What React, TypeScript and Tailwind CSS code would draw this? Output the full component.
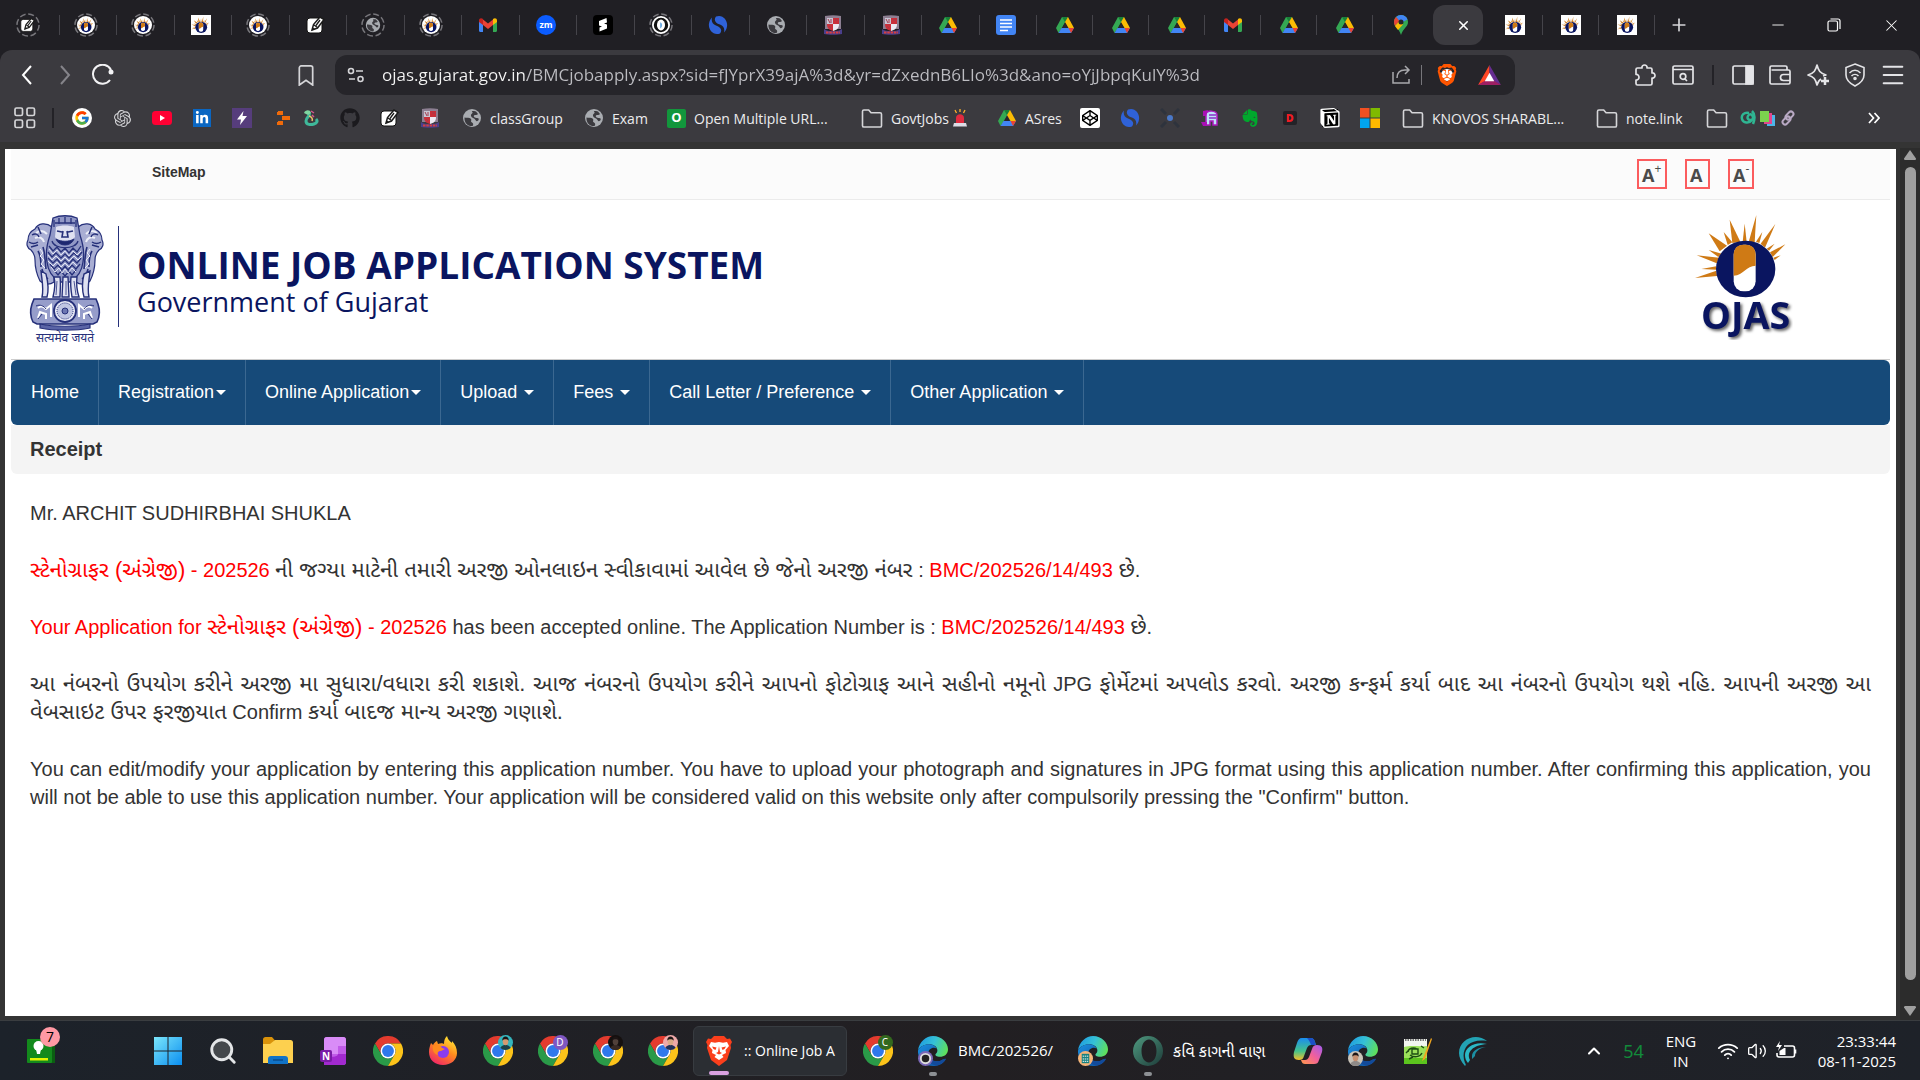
import { useState, type ReactNode } from 'react';
import { Minus, Plus, X, ChevronUp, Wifi, Volume2, Menu, Search } from 'lucide-react';
import { FaBrave, FaCodepen, FaEvernote, FaGithub, FaLinkedinIn } from 'react-icons/fa6';
import { FcGoogle } from 'react-icons/fc';
import { SiNotion, SiOpenai } from 'react-icons/si';

/* ---------- Site logo ---------- */

const rays = [
    '507,307 525,307 530,226',
    '458,310 482,306 450,240',
    '543,312 556,324 587,253',
    '420,335 442,318 387,281',
    '489,307 501,307 495,252',
    '444,316 458,308 432,277',
    '529,306 539,310 548,277',
    '561,327 568,333 585,312',
    '571,338 579,352 617,314',
    '581,354 585,361 603,347',
    '416,352 426,342 387,331',
    '411,371 418,354 351,347',
    '410,380 410,390 365,388',
    '410,393 412,409 346,415',
];

function OjasSun() {
    return (
        <g>
            {rays.map((points) => (
                <polygon key={points} points={points} fill="#cf7a15" />
            ))}
            <ellipse cx="498" cy="388" rx="89" ry="85" fill="#0a1560" />
            <rect x="462" y="315" width="66" height="140" rx="30" fill="#fff" />
            <path d="M462 408V345c0-20 12-30 28-30h10c16 0 28 10 28 30v33c-28 0-36 28-66 30Z" fill="#cf7a15" />
        </g>
    );
}

function OjasLogo() {
    return (
        <svg viewBox="340 220 300 381" className="h-[127px] w-[100px]" role="img" aria-label="OJAS">
            <OjasSun />
            <text
                x="364"
                y="568"
                fontSize="113"
                fontWeight="700"
                fill="#0a1560"
                className="font-['Open_Sans',sans-serif] drop-shadow-[6px_6px_5px_rgba(0,0,0,0.6)]"
            >
                OJAS
            </text>
        </svg>
    );
}

function Emblem() {
    return (
        <svg viewBox="0 0 78 130" className="h-[130px] w-[78px]" role="img" aria-label="State emblem of India" fill="none" stroke="#26307a">
            {/* side lions */}
            <path d="M26 12c-6-5-14-4-17 2-4 2-7 6-7 11-2 4-1 8 3 10 3 3 4 6 4 10 0 8 2 15 5 21 4 4 10 4 14 1V20Z" fill="#a9aed3" strokeWidth="1.2" />
            <path d="M52 12c6-5 14-4 17 2 4 2 7 6 7 11 2 4 1 8-3 10-3 3-4 6-4 10 0 8-2 15-5 21-4 4-10 4-14 1V20Z" fill="#a9aed3" strokeWidth="1.2" />
            <path d="M10 18c4-3 8-2 11 1M9 23c4-2 8 0 9 4M60 19c3-3 7-4 11-1M60 27c1-4 5-6 9-4" stroke="#eceef8" strokeWidth="2" />
            <path d="M6 20c3-2 6-1 7 2M3 27c3 2 6 2 9 0M5 32l7-2M12 12l3 7M72 20c-3-2-6-1-7 2M75 27c-3 2-6 2-9 0M73 32l-7-2M66 12l-3 7" strokeWidth="1.5" />
            <path d="M12 36c3 5 3 10 3 16M17 32c2 6 2 14 3 22M16 54c1 5 3 8 6 10M66 36c-3 5-3 10-3 16M61 32c-2 6-2 14-3 22M62 54c-1 5-3 8-6 10" strokeWidth="1.6" />
            <path d="M14 34l3 4-3 3 4 4-3 4 4 4M64 34l-3 4 3 3-4 4 3 4-4 4" stroke="#eceef8" strokeWidth="1" />
            {/* centre lion */}
            <path d="M27 3c7-3 17-3 24 0l3 17c3 9 5 17 3 27-1 9-6 16-13 20H34c-7-4-12-11-13-20-2-10 0-18 3-27Z" fill="#9198c6" strokeWidth="1.3" />
            <path d="M30 12c5-2 13-2 18 0l1 10c-4 7-16 7-20 0Z" fill="#dfe1f1" stroke="none" />
            <path d="M29 8h20M28 5v7M33 3v6M39 2v6M45 3v6M50 5v7" strokeWidth="1.3" />
            <path d="M31 16l5 1M47 16l-5 1M37 16l-1 6h6l-1-6" strokeWidth="1.6" />
            <path d="M30 24c3 8 15 8 18 0-5 3-13 3-18 0Z" fill="#1d276f" />
            <path d="M26 26c2 9 24 9 26 0" strokeWidth="1.2" />
            <path
                d="M23 31l4 5 4-4 4 5 4-4 4 5 4-5 4 4 4-6M22 37l4 5 4-4 5 5 4-4 4 4 5-5 4 4 4-5M22 43l5 5 4-4 4 5 4-4 4 4 4-5 4 4 4-5M24 49l4 5 4-4 4 5 3-4 3 4 4-5 4 4 4-5M28 55l4 5 3-4 4 5 4-5 3 4 4-5"
                stroke="#26307a"
                strokeWidth="1.3"
            />
            <path
                d="M23 34l4 5 4-4 4 5 4-4 4 5 4-5 4 4 4-4M22 40l4 5 4-4 5 5 4-4 4 4 5-5 4 4 4-4M22 46l5 5 4-4 4 5 4-4 4 4 4-5 4 4M25 52l4 5 4-4 3 5 3-4 3 4 4-5 4 4"
                stroke="#e3e5f3"
                strokeWidth="1"
            />
            {/* legs */}
            <path d="M15 56c1 10 3 18 1 26h5c2-7 1-15-1-23ZM28 62c2 8 0 16-1 20h7c0-6 1-12 0-20ZM37 62l-1 20h7l-1-20ZM45 62c-1 8 0 14 1 20h7c-2-6-3-12-2-20ZM58 59c-2 8-2 16 0 23h5c-2-8 0-16 1-26Z" fill="#dfe1f1" strokeWidth="1.4" />
            <path d="M31 66l-1 14M40 66v14M48 66l2 14" strokeWidth="0.8" />
            {/* abacus with the wheel */}
            <path d="M8 84h62l2 5c2 6 2 12-1 18l-4 2H11l-4-2c-3-6-3-12-1-18Z" fill="#969dca" strokeWidth="1.6" />
            <circle cx="39" cy="96" r="11" fill="#e9eaf6" strokeWidth="1.8" />
            <circle cx="39" cy="96" r="8" fill="#c0c5e2" strokeWidth="1" strokeDasharray="1 1" />
            <circle cx="39" cy="96" r="3" fill="#6d76b2" />
            <path d="M12 93c3-3 6-1 8 1l5-4v12M12 103l2-6 6 2v5M66 93c-3-3-6-1-8 1l-5-4v12M66 103l-2-6-6 2v5" stroke="#fff" strokeWidth="2" />
            <path d="M10 91c4-2 8 0 10 3M12 104l4-5M68 91c-4-2-8 0-10 3M66 104l-4-5" strokeWidth="1" />
            <path d="M14 109c14 3 36 3 50 0v4c-14 3-36 3-50 0Z" fill="#5a64a6" strokeWidth="1.2" />
            <text x="39" y="127" textAnchor="middle" fontSize="12" fill="#26307a" stroke="none" className="font-['Noto_Sans',sans-serif]">
                सत्यमेव जयते
            </text>
        </svg>
    );
}

/* ---------- Favicons ---------- */

function OjasFavicon() {
    return (
        <svg viewBox="335 215 300 300" className="size-5 bg-white">
            <g transform="translate(-10 12)">
                <OjasSun />
            </g>
        </svg>
    );
}

function Sleeping({ children }: { children: ReactNode }) {
    return (
        <span className="relative flex size-6 items-center justify-center">
            <svg viewBox="0 0 26 26" className="absolute size-6" fill="none" stroke="#77767b" strokeWidth="1.6">
                <circle cx="13" cy="13" r="12" strokeDasharray="6.5 2.9" />
            </svg>
            {children}
        </span>
    );
}

function OjasSleeping() {
    return (
        <Sleeping>
            <svg viewBox="335 215 300 300" className="size-[18px] rounded-full bg-white">
                <g transform="translate(-10 12)">
                    <OjasSun />
                </g>
            </svg>
        </Sleeping>
    );
}

function PencilIcon({ small = false }: { small?: boolean }) {
    return (
        <svg viewBox="0 0 20 20" className={small ? 'size-4' : 'size-5'}>
            <rect x="1" y="3" width="15" height="15" rx="3" fill="#fff" stroke="#111" strokeWidth="1" />
            <path d="M6 15l1.500-5.500L14 2l4 2.500-6.500 8.500Z" fill="#fff" stroke="#1b1b1b" strokeWidth="1.500" />
            <path d="M8 10l3.500 2.500M14 5l-4 5.500" stroke="#1b1b1b" strokeWidth="1.300" />
            <path d="M6 15.500l1-3 2 1.500Z" fill="#1b1b1b" />
        </svg>
    );
}

function GlobeIcon({ small = false }: { small?: boolean }) {
    return (
        <svg viewBox="0 0 20 20" className={small ? 'size-4' : 'size-5'}>
            <circle cx="10" cy="10" r="9" fill="#a9acb1" />
            <path d="M2.500 9.500c3 .5 5-.5 6.500 1.500 1 1.500-1 2.500 1 3.500s1 3 .5 3.500C6 18.500 2 15 2.500 9.500ZM10 3c1 0 3-.5 4 .5l2 2.500c-1 1.500-3 .5-4 1.500s1 2.500 3 2.500 2 1 1.500 2-2 2-3 0-4-2-4.500-4 1-2 1.500-3-1-1.500-.5-2Z" fill="#3b3a3f" />
        </svg>
    );
}

function GmailIcon() {
    return (
        <svg viewBox="0 0 20 20" className="size-5">
            <path d="M1 5v10.500c0 .8.500 1.500 1.500 1.500H5V9L1 5.500Z" fill="#4285f4" />
            <path d="M19 5v10.500c0 .8-.5 1.500-1.500 1.500H15V9l4-3.500Z" fill="#34a853" />
            <path d="M5 4.500l5 4 5-4V10l-5 4-5-4Z" fill="#ea4335" />
            <path d="M1 5.500C1 3 3.500 2.500 5 4v6L1 7Z" fill="#c5221f" />
            <path d="M19 5.500C19 3 16.500 2.500 15 4v6l4-3Z" fill="#fbbc04" />
        </svg>
    );
}

function ZoomIcon() {
    return (
        <svg viewBox="0 0 20 20" className="size-5">
            <circle cx="10" cy="10" r="10" fill="#0b5cff" />
            <text x="10" y="13" textAnchor="middle" fontSize="9" fontWeight="700" fill="#fff" className="font-['Open_Sans',sans-serif]">
                zm
            </text>
        </svg>
    );
}

function BlackSIcon() {
    return (
        <svg viewBox="0 0 20 20" className="size-5">
            <rect width="20" height="20" rx="4" fill="#000" />
            <path d="M13.500 3 6 6v4.500l3 1-2.500 1v4L14 13.500V9.500l-3-1 3-1Z" fill="#fff" />
        </svg>
    );
}

function OvalIcon() {
    return (
        <Sleeping>
            <svg viewBox="0 0 20 20" className="size-[18px]">
                <circle cx="10" cy="10" r="9" fill="#111" stroke="#fff" strokeWidth="2" />
                <ellipse cx="10" cy="10" rx="4.500" ry="6" fill="#fff" />
                <path d="M9 7c3 1 3 5 0 7Z" fill="#6aa9e0" />
            </svg>
        </Sleeping>
    );
}

function BlueSIcon() {
    return (
        <svg viewBox="0 0 20 20" className="size-5" fill="#2f62d8">
            <path d="M8 1.500c7-2.500 12 4 11 10-.5 3-1.500 4.500-3 6 1-4-.5-6.500-4-8C7 8 5.500 4.500 8 1.500Z" />
            <path d="M12 18.500c-7 2.500-12-4-11-10 .5-3 1.500-4.500 3-6-1 4 .5 6.500 4 8 5 1.500 6.500 5 4 8Z" />
        </svg>
    );
}

function CrestIcon() {
    return (
        <svg viewBox="0 0 20 20" className="size-5">
            <path d="M2 1c5-1 11-1 16 0v13H2Z" fill="#8d7f92" />
            <path d="M4 3h6v6H4Z" fill="#c9c6d4" />
            <path d="M10 3h6v6h-6Z" fill="#c92f3a" />
            <path d="M4 9h6v7c-4-1-6-3-6-7Z" fill="#c92f3a" />
            <path d="M10 9h6c0 4-2 6-6 7Z" fill="#eceaf2" />
            <path d="M5 4l2 4M8 4v4M12 5h3M6 11l2 2" stroke="#a33a4c" />
            <path d="M1 14c4 3 14 3 18 0v5c-4 1-14 1-18 0Z" fill="#4b3f8c" />
            <path d="M3 17.500h14" stroke="#d63f3f" strokeWidth="2" strokeDasharray="2.500 .8" />
        </svg>
    );
}

function DriveIcon() {
    return (
        <svg viewBox="0 0 20 20" className="size-5">
            <path d="M7 2h6L6 14.500 3.500 18 1 13Z" fill="#34a853" />
            <path d="M7 2h6l-3 5Z" fill="#188038" />
            <path d="M13 2l6 11h-5.500L10 7Z" fill="#fbbc04" />
            <path d="M6.500 13H19l-3 5H3.500Z" fill="#4285f4" />
            <path d="M13.500 13H19l-3 5Z" fill="#ea4335" />
            <path d="M10 8l2.800 5H7.200Z" fill="#26252a" />
        </svg>
    );
}

function DocsIcon() {
    return (
        <svg viewBox="0 0 20 20" className="size-5">
            <rect width="20" height="20" rx="3" fill="#4285f4" />
            <path d="M4 5h12M4 8.500h12M4 12h12M4 15.500h8" stroke="#fff" strokeWidth="1.700" />
        </svg>
    );
}

function MapsIcon() {
    return (
        <svg viewBox="0 0 20 20" className="size-5">
            <path d="M10 0c4 0 7 3 7 7 0 5-5 6-7 13C8 13 3 12 3 7c0-4 3-7 7-7Z" fill="#34a853" />
            <path d="M10 0c3 0 5.500 1.500 6.500 4.500L10 8 5 2C6.500.7 8 0 10 0Z" fill="#4285f4" />
            <path d="M5 2l3.500 4L4 11C2.500 8 2.500 4.500 5 2Z" fill="#ea4335" />
            <path d="M4 11l5-5.500 3 4L7 15C6 13.500 4.800 12.500 4 11Z" fill="#fbbc04" />
            <circle cx="10" cy="7" r="2.500" fill="#26252a" />
        </svg>
    );
}

const leftTabs: { title: string; icon: ReactNode }[] = [
    { title: 'Notes', icon: <Sleeping><PencilIcon small /></Sleeping> },
    { title: 'OJAS', icon: <OjasSleeping /> },
    { title: 'OJAS', icon: <OjasSleeping /> },
    { title: 'OJAS', icon: <OjasFavicon /> },
    { title: 'OJAS', icon: <OjasSleeping /> },
    { title: 'Notes', icon: <PencilIcon /> },
    { title: 'Page', icon: <Sleeping><GlobeIcon small /></Sleeping> },
    { title: 'OJAS', icon: <OjasSleeping /> },
    { title: 'Gmail', icon: <GmailIcon /> },
    { title: 'Zoom', icon: <ZoomIcon /> },
    { title: 'Page', icon: <BlackSIcon /> },
    { title: 'Page', icon: <OvalIcon /> },
    { title: 'Page', icon: <BlueSIcon /> },
    { title: 'Page', icon: <GlobeIcon /> },
    { title: 'University', icon: <CrestIcon /> },
    { title: 'University', icon: <CrestIcon /> },
    { title: 'Drive', icon: <DriveIcon /> },
    { title: 'Docs', icon: <DocsIcon /> },
];

const middleTabs: { title: string; icon: ReactNode }[] = [
    { title: 'Drive', icon: <DriveIcon /> },
    { title: 'Drive', icon: <DriveIcon /> },
    { title: 'Drive', icon: <DriveIcon /> },
    { title: 'Gmail', icon: <GmailIcon /> },
    { title: 'Drive', icon: <DriveIcon /> },
    { title: 'Drive', icon: <DriveIcon /> },
];

function TabStrip() {
    return (
        <div className="flex h-[50px] shrink-0 items-center bg-[#201f24] pl-0.5">
            <div className="flex w-[1035px]">
                {leftTabs.map((tab, i) => (
                    <button key={i} aria-label={tab.title} className="flex h-5 flex-1 items-center justify-center border-r border-[#45444a] pr-1">
                        {tab.icon}
                    </button>
                ))}
            </div>
            {middleTabs.map((tab, i) => (
                <button key={i} aria-label={tab.title} className="flex h-5 w-14 items-center justify-center border-r border-[#45444a]">
                    {tab.icon}
                </button>
            ))}
            <button aria-label="Maps" className="flex h-5 w-14 items-center justify-center">
                <MapsIcon />
            </button>
            <button aria-label="Close tab" className="mx-1 flex h-10 w-[50px] items-center justify-center rounded-xl bg-[#3b3a3f] pl-2.5 text-white">
                <X className="size-[15px]" strokeWidth={2.5} />
            </button>
            {[0, 1, 2].map((i) => (
                <button key={i} aria-label="OJAS" className="flex h-5 w-14 items-center justify-center border-r border-[#45444a]">
                    <OjasFavicon />
                </button>
            ))}
            <button aria-label="New tab" className="ml-[14px] text-[#d5d5d8]">
                <Plus className="size-5" />
            </button>
            <div className="ml-auto flex text-white">
                <button aria-label="Minimize" className="flex w-14 justify-center">
                    <Minus className="size-[18px]" strokeWidth={1.2} />
                </button>
                <button aria-label="Restore" className="flex w-14 items-center justify-center">
                    <svg viewBox="0 0 14 14" className="size-[14px]" fill="none" stroke="#fff" strokeWidth="1.200">
                        <rect x="1" y="3" width="9.500" height="10" rx="1.500" />
                        <path d="M3.500 1H11a2 2 0 0 1 2 2v8" />
                    </svg>
                </button>
                <button aria-label="Close" className="flex w-[58px] justify-center">
                    <X className="size-[19px]" strokeWidth={1.3} />
                </button>
            </div>
        </div>
    );
}

/* ---------- Address row ---------- */

function BatIcon() {
    return (
        <svg viewBox="0 0 24 22" className="h-[21px] w-[23px]">
            <path d="M12 0 0 21l8-4 4-8Z" fill="#ff4724" />
            <path d="M12 0l12 21-8-4-4-8Z" fill="#662d91" />
            <path d="M0 21h24l-8-5H8Z" fill="#9e1f63" />
            <path d="M12 8l5 9H7Z" fill="#fff" />
        </svg>
    );
}

function AddressRow() {
    const [url, setUrl] = useState('ojas.gujarat.gov.in/BMCjobapply.aspx?sid=fJYprX39ajA%3d&yr=dZxednB6LIo%3d&ano=oYjJbpqKulY%3d');

    return (
        <div className="flex h-[50px] items-center text-[#e4e4e7]">
            <div className="flex w-[335px] items-center pl-2">
                <button aria-label="Back" className="flex w-[38px] justify-center">
                    <svg viewBox="0 0 20 20" className="size-5" fill="none" stroke="#fff" strokeWidth="2">
                        <path d="M14 1 6 10l8 9" />
                    </svg>
                </button>
                <button aria-label="Forward" className="flex w-[38px] justify-center">
                    <svg viewBox="0 0 20 20" className="size-5" fill="none" stroke="#85848a" strokeWidth="2">
                        <path d="M6 1l8 9-8 9" />
                    </svg>
                </button>
                <button aria-label="Reload" className="flex w-[38px] justify-center">
                    <svg viewBox="0 0 24 22" className="h-[22px] w-6" fill="none" stroke="#f2f2f4" strokeWidth="2">
                        <path d="M19 16A9.500 9.500 0 1 1 20 6" />
                        <circle cx="20" cy="8" r="2.500" fill="#f2f2f4" stroke="none" />
                    </svg>
                </button>
                <button aria-label="Bookmark this page" className="mr-5 ml-auto">
                    <svg viewBox="0 0 18 22" className="h-[21px] w-[18px]" fill="none" stroke="#d5d5d8" strokeWidth="1.800">
                        <path d="M2 3a2 2 0 0 1 2-2h10a2 2 0 0 1 2 2v18l-7-5-7 5Z" />
                    </svg>
                </button>
            </div>

            <div className="flex h-10 flex-1 items-center rounded-xl bg-[#26252a] pl-3">
                <button aria-label="Site information">
                    <svg viewBox="0 0 18 18" className="size-[18px]" fill="none" stroke="#d5d5d8" strokeWidth="1.600">
                        <circle cx="4" cy="5" r="2.500" />
                        <circle cx="13.500" cy="13" r="2.500" />
                        <path d="M9 5h7M2 13h6" />
                    </svg>
                </button>
                <input
                    aria-label="Address"
                    value={url}
                    onChange={(e) => setUrl(e.target.value)}
                    className="ml-[17px] h-8 flex-1 bg-[linear-gradient(90deg,#f5f5f5_145px,#bdbdc2_145px)] bg-clip-text pb-0.5 font-['Open_Sans',sans-serif] text-[17px] text-transparent outline-none"
                />
                <div className="flex items-center">
                    <button aria-label="Share" className="mr-2.5">
                        <svg viewBox="0 0 20 20" className="size-5" fill="none" stroke="#a9a9ad" strokeWidth="1.500">
                            <path d="M2 7v11h16v-4M6 13c0-5 3-8 8-8h4M14 1l4 4-4 4" />
                        </svg>
                    </button>
                    <span className="h-5 w-px bg-[#77767b]" />
                    <button aria-label="Brave Shields" className="ml-[14px] text-[#ff5500]">
                        <span className="relative flex size-[22px] items-center justify-center">
                            <span className="absolute size-3 rounded-full bg-white" />
                            <FaBrave className="relative size-[22px]" />
                        </span>
                    </button>
                    <button aria-label="Brave Rewards" className="mr-[14px] ml-5">
                        <BatIcon />
                    </button>
                </div>
            </div>

            <div className="flex w-[405px] items-center justify-end pr-2">
                <button aria-label="Extensions" className="flex w-[38px] justify-center">
                    <svg viewBox="0 0 24 24" className="size-6" fill="none" stroke="currentColor" strokeWidth="1.700" strokeLinejoin="round">
                        <path d="M3 6.500c0-1 .5-1.500 1.500-1.500H9c-.8-4 5.800-4 5 0h3.500c1 0 1.500.5 1.500 1.500V10c4-.8 4 5.800 0 5v5.500c0 1-.5 1.500-1.500 1.500h-13c-1 0-1.500-.5-1.500-1.500V17c4 .5 4-6 0-5.500Z" />
                    </svg>
                </button>
                <button aria-label="Search tabs" className="flex w-[38px] justify-center">
                    <svg viewBox="0 0 22 22" className="size-[22px]" fill="none" stroke="currentColor" strokeWidth="1.700">
                        <rect x="1" y="2" width="20" height="18" rx="1.500" />
                        <path d="M1 5.500h20M12.500 14.500 15 17" />
                        <circle cx="11" cy="12.500" r="2.800" />
                    </svg>
                </button>
                <span className="mx-2.5 h-5 w-0.5 bg-[#232227]" />
                <button aria-label="Sidebar" className="flex w-[37px] justify-center">
                    <svg viewBox="0 0 22 22" className="size-[22px]" fill="none" stroke="currentColor" strokeWidth="1.700">
                        <rect x="1" y="2" width="20" height="18" rx="1.500" />
                        <path d="M14 2h7v18h-7Z" fill="currentColor" />
                    </svg>
                </button>
                <button aria-label="Wallet" className="flex w-[38px] justify-center">
                    <svg viewBox="0 0 22 22" className="size-[22px]" fill="none" stroke="currentColor" strokeWidth="1.700">
                        <path d="M18 6V3.500A1.500 1.500 0 0 0 16.500 2h-14A1.500 1.500 0 0 0 1 3.500v15A1.500 1.500 0 0 0 2.500 20h17a1.500 1.500 0 0 0 1.500-1.500v-11A1.500 1.500 0 0 0 19.500 6H2.500" />
                        <path d="M21 10.500h-6.500a3 3 0 0 0 0 6H21" />
                    </svg>
                </button>
                <button aria-label="Leo AI" className="flex w-[37px] justify-center">
                    <svg viewBox="0 0 24 24" className="size-6" fill="none" stroke="currentColor" strokeWidth="1.700" strokeLinejoin="round">
                        <path d="M15 16c-2 1-3 3-4 6-1.500-6-3-8-9-10 6-2 7.500-4 9-10 1.500 6 3 8 9 10-1 .3-2 .7-3 1" />
                        <path d="M19 14v8M15 18h8" strokeWidth="2.500" />
                    </svg>
                </button>
                <button aria-label="VPN" className="flex w-[38px] justify-center">
                    <svg viewBox="0 0 22 24" className="h-6 w-[22px]" fill="none" stroke="currentColor" strokeWidth="1.600">
                        <path d="M11 1l9 3.500V12c0 5-4 8.500-9 11-5-2.500-9-6-9-11V4.500Z" />
                        <path d="M5.500 10c3.500-3.500 7.500-3.500 11 0M7.500 13c2-2 5-2 7 0" />
                        <circle cx="11" cy="15.500" r="1" fill="currentColor" />
                    </svg>
                </button>
                <button aria-label="Menu" className="flex w-[38px] justify-center">
                    <Menu className="size-7" strokeWidth={1.7} />
                </button>
            </div>
        </div>
    );
}

/* ---------- Bookmarks ---------- */

function FolderOutline() {
    return (
        <svg viewBox="0 0 22 20" className="h-[19px] w-[22px] shrink-0" fill="none" stroke="#d5d5d8" strokeWidth="1.700">
            <path d="M1 17.500v-15C1 1.500 1.500 1 2.500 1h5l2.500 3h9.500c1 0 1.500.5 1.500 1.500v12c0 1-.5 1.500-1.500 1.500h-17C1.500 19 1 18.500 1 17.500Z" />
        </svg>
    );
}

function SirenIcon() {
    return (
        <svg viewBox="0 0 14 18" className="h-[18px] w-[14px] shrink-0">
            <path d="M3 14V9c0-5 8-5 8 0v5Z" fill="#e02b3f" />
            <path d="M1 14h12l1 3.500H0Z" fill="#dcdce6" />
            <path d="M7 0v3M2 1l1.500 3M12 1l-1.500 3" stroke="#ffb02e" strokeWidth="1.300" />
        </svg>
    );
}

const quickLinks: { title: string; icon: ReactNode }[] = [
    { title: 'Google', icon: <span className="flex size-5 items-center justify-center rounded-full bg-white"><FcGoogle className="size-4" /></span> },
    { title: 'ChatGPT', icon: <SiOpenai className="size-[17px] text-[#d5d5d8]" /> },
    {
        title: 'YouTube',
        icon: (
            <svg viewBox="0 0 20 14" className="h-[14px] w-5">
                <rect width="20" height="14" rx="3.500" fill="#ff0033" />
                <path d="M8 4l5 3-5 3Z" fill="#fff" />
            </svg>
        ),
    },
    { title: 'LinkedIn', icon: <span className="flex size-[18px] items-center justify-center bg-[#0a66c2] text-white"><FaLinkedinIn className="size-[14px]" /></span> },
    {
        title: 'Bolt',
        icon: (
            <svg viewBox="0 0 20 20" className="size-5">
                <rect width="20" height="20" fill="#563d7c" />
                <path d="M11.500 3 5 11.500h4L8 17l7-9h-4.500Z" fill="#fff" />
            </svg>
        ),
    },
];

const middleLinks: { title: string; icon: ReactNode }[] = [
    { title: 'GitHub', icon: <FaGithub className="size-5 text-[#1b1a1e]" /> },
    { title: 'Notes', icon: <PencilIcon /> },
    { title: 'University', icon: <CrestIcon /> },
];

const siteLinks: { title: string; icon: ReactNode }[] = [
    { title: 'CodePen', icon: <span className="flex size-5 items-center justify-center rounded-xs bg-white text-black"><FaCodepen className="size-4" /></span> },
    { title: 'Simplenote', icon: <BlueSIcon /> },
    {
        title: 'Hub',
        icon: (
            <svg viewBox="0 0 20 20" className="size-5" stroke="#2e333d" strokeWidth="3">
                <path d="M1 1l5 5M19 1l-5 5M1 19l5-5M19 19l-5-5" />
                <circle cx="10" cy="10" r="3" fill="#4a78c8" stroke="none" />
            </svg>
        ),
    },
    {
        title: 'Machine',
        icon: (
            <svg viewBox="0 0 18 18" className="size-[18px]">
                <path d="M5 16V5c0-4 11-4 11 1v10h-4v-4H9v4Z" fill="#bfe3f7" stroke="#b01ac0" strokeWidth="1.500" />
                <path d="M8 6h7M8 9h7" stroke="#8a2fc9" strokeWidth="1.400" />
                <path d="M2 2l5-1-2 6H2ZM0 13h6v4H2Z" fill="#a90fb5" />
            </svg>
        ),
    },
    { title: 'Evernote', icon: <FaEvernote className="size-5 text-[#00a82d]" /> },
    {
        title: 'D',
        icon: (
            <svg viewBox="0 0 14 14" className="size-[14px]">
                <rect width="14" height="14" rx="2" fill="#232227" />
                <path d="M5 4h1.500a3 3 0 0 1 0 6H5Z" fill="none" stroke="#ed1c24" strokeWidth="2.200" />
            </svg>
        ),
    },
    {
        title: 'Notion',
        icon: (
            <span className="relative flex size-5 items-center justify-center">
                <span className="absolute inset-x-0.5 inset-y-px bg-black" />
                <SiNotion className="relative size-5 text-white" />
            </span>
        ),
    },
    {
        title: 'Microsoft',
        icon: (
            <svg viewBox="0 0 20 20" className="size-5">
                <rect width="9.500" height="9.500" fill="#f25022" />
                <rect x="10.500" width="9.500" height="9.500" fill="#7fba00" />
                <rect y="10.500" width="9.500" height="9.500" fill="#00a4ef" />
                <rect x="10.500" y="10.500" width="9.500" height="9.500" fill="#ffb900" />
            </svg>
        ),
    },
];

function IconLinks({ items }: { items: { title: string; icon: ReactNode }[] }) {
    return (
        <>
            {items.map((item) => (
                <a key={item.title} href="#" aria-label={item.title} className="flex w-10 shrink-0 justify-center">
                    {item.icon}
                </a>
            ))}
        </>
    );
}

function NamedLink({ icon, label, width }: { icon: ReactNode; label: string; width: string }) {
    return (
        <a href="#" className={`flex shrink-0 items-center gap-2 pl-3 whitespace-nowrap ${width}`}>
            {icon}
            {label}
        </a>
    );
}

function BookmarksBar() {
    return (
        <div className="flex h-[42px] items-center pb-1.5 font-['Open_Sans',sans-serif] text-[14px] text-[#ececee]">
            <button aria-label="All bookmarks" className="ml-[14px]">
                <svg viewBox="0 0 22 22" className="size-[22px]" fill="none" stroke="#d5d5d8" strokeWidth="1.700">
                    <rect x="1" y="1" width="7.500" height="7.500" rx="1.500" />
                    <rect x="13" y="1" width="7.500" height="7.500" rx="1.500" />
                    <rect x="1" y="13" width="7.500" height="7.500" rx="1.500" />
                    <rect x="13" y="13" width="7.500" height="7.500" rx="1.500" />
                </svg>
            </button>
            <span className="mr-2 ml-4 h-5 w-0.5 bg-[#232227]" />
            <IconLinks items={quickLinks} />
            <a href="#" aria-label="Games" className="flex w-[68px] shrink-0 items-center justify-center gap-3 pl-1">
                <svg viewBox="0 0 14 16" className="h-4 w-[14px]" fill="#f06a0a">
                    <path d="M1 1h5v4H1ZM1 11h5v4H1ZM5 6h3v4H5ZM8 6h5v4H8ZM0 2h2v3H0ZM0 12h2v3H0Z" />
                </svg>
                <svg viewBox="0 0 16 18" className="h-[18px] w-4" fill="none">
                    <path d="M6 4c2 3-3 4-3 8s5 4 8 3 4-3 2-5" stroke="#3fb89a" strokeWidth="3" />
                    <path d="M1 4c1-3 6-4 7 0l-3 2Z" fill="#7fd6a0" />
                    <path d="M6 7c3 1 4 3 3 5" stroke="#e9c46a" strokeWidth="1.500" />
                    <path d="M8 2l3 2M9 6l2 2" stroke="#d6568c" strokeWidth="1.500" />
                </svg>
            </a>
            <IconLinks items={middleLinks} />
            <NamedLink icon={<GlobeIcon />} label="classGroup" width="w-[122px]" />
            <NamedLink icon={<GlobeIcon />} label="Exam" width="w-[83px]" />
            <NamedLink
                icon={<span className="flex size-[19px] items-center justify-center rounded-xs bg-[#12963c] text-[13px] font-bold text-white">O</span>}
                label="Open Multiple URL..."
                width="w-[194px]"
            />
            <a href="#" className="flex w-[136px] shrink-0 items-center pl-3">
                <FolderOutline />
                <span className="mr-1 ml-2">GovtJobs</span>
                <SirenIcon />
            </a>
            <NamedLink icon={<DriveIcon />} label="ASres" width="w-[85px]" />
            <IconLinks items={siteLinks} />
            <NamedLink icon={<FolderOutline />} label="KNOVOS SHARABL..." width="w-[194px]" />
            <NamedLink icon={<FolderOutline />} label="note.link" width="w-[110px]" />
            <a href="#" aria-label="Links" className="flex shrink-0 items-center gap-1 pl-3">
                <FolderOutline />
                <svg viewBox="0 0 16 16" className="ml-2 size-4" fill="none" stroke="#2fb592" strokeWidth="2.500">
                    <path d="M9 3C4 2 1 5 2 9s7 5 10 1-2-8-4-4 3 5 5 3" />
                    <path d="M12 1c3 3 3 8 1 13" />
                </svg>
                <svg viewBox="0 0 16 16" className="size-4">
                    <rect x="7" y="5" width="8" height="11" fill="#4cb5e8" />
                    <rect x="4" y="3" width="8" height="11" fill="#e2458c" />
                    <rect x="0" y="1" width="9" height="11" fill="#7bd34e" />
                </svg>
                <svg viewBox="0 0 16 16" className="size-4" fill="none" stroke="#b9a9c4" strokeWidth="2">
                    <rect x="7" y="1" width="5" height="9" rx="2.500" transform="rotate(45 9.500 5.500)" />
                    <rect x="4" y="6" width="5" height="9" rx="2.500" transform="rotate(45 6.500 10.500)" />
                </svg>
            </a>
            <button aria-label="More bookmarks" className="mr-10 ml-auto">
                <svg viewBox="0 0 12 12" className="size-3" fill="none" stroke="#fff" strokeWidth="1.700">
                    <path d="M1 1l4.500 5L1 11M6.500 1 11 6l-4.500 5" />
                </svg>
            </button>
        </div>
    );
}

/* ---------- Web page ---------- */

const menus = ['Registration', 'Online Application', 'Upload ', 'Fees ', 'Call Letter / Preference ', 'Other Application '];

function NavBar() {
    return (
        <nav className="flex h-[65px] rounded-md bg-[#164a79] text-[18px] text-white">
            <a href="#" className="flex items-center border-r border-[#3b6891] px-5 pr-[19px]">
                Home
            </a>
            {menus.map((label) => (
                <button key={label} className="flex items-center border-r border-[#3b6891] px-[19px] whitespace-pre">
                    {label}
                    <svg viewBox="0 0 10 5" className="ml-0.5 h-[5px] w-2.5" fill="#fff">
                        <path d="M0 0h10L5 5Z" />
                    </svg>
                </button>
            ))}
        </nav>
    );
}

function TextSizeButton({ suffix, width }: { suffix: string; width: string }) {
    return (
        <button className={`flex h-[30px] items-center border-2 border-[#fb5c5e] pt-0.5 pl-[3px] font-['Open_Sans',sans-serif] text-[18px] font-bold text-[#4a4a4a] ${width}`}>
            A<sup className="text-[12px] font-normal">{suffix}</sup>
        </button>
    );
}

// Gujarati runs are set a step larger than the Latin text around them
function Gu({ children }: { children: ReactNode }) {
    return (
        <span lang="gu" className="text-[22px]">
            {children}
        </span>
    );
}

function ReceiptPage() {
    return (
        <main className="min-w-0 flex-1 overflow-hidden bg-white px-1.5 font-['Liberation_Sans','Noto_Sans_Gujarati',sans-serif] text-[#333]">
            <div className="flex h-[51px] items-center justify-between border-b border-[#ebebeb] bg-[#fbfbfb] pr-[136px] pb-2.5 pl-[141px] pt-2.5">
                <a href="#" className="pb-1 text-[14px] font-bold">
                    SiteMap
                </a>
                <div className="flex gap-[18px]">
                    <TextSizeButton suffix="+" width="w-[30px]" />
                    <TextSizeButton suffix="" width="w-[25px]" />
                    <TextSizeButton suffix="-" width="w-[26px]" />
                </div>
            </div>

            <header className="flex h-40 items-start justify-between border-b border-[#ccc] pr-[97px] pl-[15px]">
                <div className="flex pt-[15px]">
                    <Emblem />
                    <div className="mt-[11px] ml-[14px] h-[101px] w-px bg-[#26307a]" />
                    <div className="ml-[18px] pt-7 font-['Open_Sans',sans-serif] text-[#0a1560]">
                        <h1 className="text-[37px] leading-[44px] font-bold">ONLINE JOB APPLICATION SYSTEM</h1>
                        <p className="text-[27px] leading-[30px]">Government of Gujarat</p>
                    </div>
                </div>
                <div className="pt-[13px]">
                    <OjasLogo />
                </div>
            </header>

            <NavBar />
            <h2 className="h-[49px] rounded-b-md bg-[#f4f4f4] pl-[19px] text-[20px] leading-[49px] font-bold">Receipt</h2>

            <article className="space-y-[29px] px-[19px] pt-[25px] text-justify text-[20px] leading-[28px]">
                <p>Mr. ARCHIT SUDHIRBHAI SHUKLA</p>
                <p>
                    <span className="text-[#f00]">
                        <Gu>સ્ટેનોગ્રાફર (અંગ્રેજી)</Gu> - 202526
                    </span>{' '}
                    <Gu>ની જગ્યા માટેની તમારી અરજી ઓનલાઇન સ્વીકાવામાં આવેલ છે જેનો અરજી નંબર</Gu> : <span className="text-[#f00]">BMC/202526/14/493</span>{' '}
                    <Gu>છે</Gu>.
                </p>
                <p>
                    <span className="text-[#f00]">
                        Your Application for <Gu>સ્ટેનોગ્રાફર (અંગ્રેજી)</Gu> - 202526
                    </span>{' '}
                    has been accepted online. The Application Number is : <span className="text-[#f00]">BMC/202526/14/493</span> <Gu>છે</Gu>.
                </p>
                <p>
                    <Gu>આ નંબરનો ઉપયોગ કરીને અરજી મા સુધારા/વધારા કરી શકાશે. આજ નંબરનો ઉપયોગ કરીને આપનો ફોટોગ્રાફ આને સહીનો નમૂનો</Gu> JPG{' '}
                    <Gu>
                        ફોર્મેટમાં અપલોડ કરવો. અરજી કન્ફર્મ કર્યા બાદ આ નંબરનો ઉપયોગ થશે નહિ. આપની અરજી આ વેબસાઇટ ઉપર ફરજીયાત
                    </Gu>{' '}
                    Confirm <Gu>કર્યા બાદજ માન્ય અરજી ગણાશે.</Gu>
                </p>
                <p>
                    You can edit/modify your application by entering this application number. You have to upload your photograph and signatures in JPG format
                    using this application number. After confirming this application, you will not be able to use this application number. Your application
                    will be considered valid on this website only after compulsorily pressing the "Confirm" button.
                </p>
            </article>
        </main>
    );
}

function ScrollBar() {
    return (
        <div className="mt-1.5 flex w-5 shrink-0 flex-col items-center bg-[#2c2c2c]">
            <svg viewBox="0 0 12 10" className="mt-0.5 h-2.5 w-3" fill="#9f9f9f">
                <path d="M6 0l6 8.500c0 1-.5 1.500-1.500 1.500h-9C.5 10 0 9.500 0 8.500Z" />
            </svg>
            <div className="mt-[7px] mb-[26px] w-[11px] flex-1 rounded-full bg-[#9f9f9f]" />
            <svg viewBox="0 0 12 10" className="mb-1 h-2.5 w-3" fill="#9f9f9f">
                <path d="M6 10 0 1.500C0 .5.500 0 1.500 0h9c1 0 1.500.5 1.500 1.500Z" />
            </svg>
        </div>
    );
}

/* ---------- Taskbar ---------- */

function ChromeIcon({ badge }: { badge?: ReactNode }) {
    return (
        <span className="relative block size-[30px]">
            <svg viewBox="0 0 48 48" className="size-[30px]">
                <path d="M3.200 12A24 24 0 0 1 44.800 12H24A12 12 0 0 0 13.600 30Z" fill="#e33b2e" />
                <path d="M3.200 12 13.600 30A12 12 0 0 0 34.400 30L24 48A24 24 0 0 1 3.200 12Z" fill="#2a9a48" />
                <path d="M44.800 12A24 24 0 0 1 24 48L34.400 30A12 12 0 0 0 24 12Z" fill="#fcc31a" />
                <circle cx="24" cy="24" r="12" fill="#fff" />
                <circle cx="24" cy="24" r="9.500" fill="#2f78ec" />
            </svg>
            {badge && <span className="absolute -top-px right-0 flex size-[15px] items-center justify-center overflow-hidden rounded-full text-[10px] text-white">{badge}</span>}
        </span>
    );
}

function Portrait({ bg, skin, shirt }: { bg: string; skin: string; shirt: string }) {
    return (
        <svg viewBox="0 0 16 16" className="size-full">
            <rect width="16" height="16" fill={bg} />
            <path d="M2 16c0-7 12-7 12 0Z" fill={shirt} />
            <ellipse cx="8" cy="7" rx="3" ry="4" fill={skin} />
            <path d="M4.500 6c0-6 7-6 7 0-2-2-5-2-7 0Z" fill="#1c1414" />
        </svg>
    );
}

function EdgeIcon({ badge }: { badge?: ReactNode }) {
    return (
        <span className="relative block size-[30px]">
            <svg viewBox="0 0 48 48" className="size-[30px]">
                <defs>
                    <linearGradient id="edge-top" x1="0" y1="0.3" x2="1" y2="0.6">
                        <stop offset="0" stopColor="#1f9be0" />
                        <stop offset="0.500" stopColor="#35c1d6" />
                        <stop offset="1" stopColor="#5fe05a" />
                    </linearGradient>
                    <linearGradient id="edge-low" x1="0" y1="0" x2="1" y2="1">
                        <stop offset="0" stopColor="#1b8fe0" />
                        <stop offset="1" stopColor="#0d4f9c" />
                    </linearGradient>
                </defs>
                <path d="M0 23C2 9 13 0 24 0c14 0 24 11 24 21 0 8-6 12-13 12-5 0-8-2-7-4 2-2 3-4 3-6 0-6-6-10-13-10C10 13 3 17 0 23Z" fill="url(#edge-top)" />
                <path d="M0 23c3-6 10-10 18-10 6 0 10 3 12 7-7-3-13 1-14 8-1 10 12 15 21 11 4-2 8-4 7-1-4 7-12 10-20 10C10 48-1 37 0 23Z" fill="url(#edge-low)" />
                <path d="M16 28c-1 10 12 15 21 11 4-2 8-4 7-1-3 5-8 8-14 9-12-1-20-11-14-19Z" fill="#124a9a" />
            </svg>
            {badge && <span className="absolute bottom-0 left-0 size-[15px] overflow-hidden rounded-full">{badge}</span>}
        </span>
    );
}

function BraveIcon() {
    return (
        <svg viewBox="0 0 26 30" className="h-[30px] w-[26px]">
            <path d="M8 0h10l3 3 3-.5L26 6l-1.500 3L25 12l-4 12-8 6-8-6-4-12 .5-3L0 6l2-3.500L5 3Z" fill="#fb3f1c" />
            <path d="M5 6l4 .8L13 6l4 .8L21 6l2 4-3.500 4 .5 3-4 2 1.500 2L13 24l-4.500-3L10 19l-4-2 .5-3L3 10Z" fill="#fff" />
            <path d="M6 10.500l4.500 1-1 2.500-2-1ZM20 10.500l-4.500 1 1 2.500 2-1ZM13 10l1 6 2 1-3 1.500-3-1.500 2-1Z" fill="#fb3f1c" />
        </svg>
    );
}

function TaskButton({ label, children }: { label: string; children: ReactNode }) {
    return (
        <button aria-label={label} className="flex h-full w-[55px] shrink-0 items-center justify-center">
            {children}
        </button>
    );
}

function WindowButton({ icon, label, active = false, size = 'text-[14px]' }: { icon: ReactNode; label: string; active?: boolean; size?: string }) {
    return (
        <button
            className={`relative mx-[3px] flex h-[50px] w-[154px] shrink-0 items-center rounded-md pl-2.5 font-['Open_Sans','Noto_Sans_Gujarati',sans-serif] text-white ${size} ${active ? 'border border-[#383c41] bg-[#2b2e33]' : ''}`}
        >
            <span className="flex w-[30px] shrink-0 justify-center">{icon}</span>
            <span className="ml-2.5 w-[98px] overflow-hidden text-left whitespace-nowrap">{label}</span>
            <span className={`absolute bottom-0 h-1 rounded-full ${active ? 'left-[15px] w-5 bg-[#d9a0e0]' : 'left-[21px] w-2 bg-[#8d9094]'}`} />
        </button>
    );
}

function Taskbar() {
    return (
        <footer className="flex h-[60px] shrink-0 items-center border-t border-[#3a3d40] bg-linear-to-r from-[#1c222a] via-[#221f22] to-[#1e2229] text-white">
            <button aria-label="Notifications" className="relative ml-[27px] w-[113px]">
                <svg viewBox="0 0 28 28" className="size-7">
                    <path d="M2 3h24l2 2v21H2L0 24V3Z" fill="#0b5e12" />
                    <rect x="0" y="2" width="25" height="24" rx="1" fill="#138a1c" />
                    <circle cx="11.500" cy="9" r="5" fill="#fff" />
                    <path d="M9 12h5l-1 5h-3Z" fill="#fff" />
                    <path d="M3 21h18v2.500H3Z" fill="#e3f500" />
                </svg>
                <span className="absolute -top-2.5 left-[13px] flex size-5 items-center justify-center rounded-full bg-[#ff99a4] font-['Open_Sans',sans-serif] text-[14px] text-black">7</span>
            </button>
            <TaskButton label="Start">
                <svg viewBox="0 0 30 30" className="size-[30px]">
                    <defs>
                        <linearGradient id="win" x1="0" y1="0" x2="1" y2="1">
                            <stop offset="0" stopColor="#7be6fb" />
                            <stop offset="1" stopColor="#0a8ef0" />
                        </linearGradient>
                    </defs>
                    <path d="M1 1h13.500v13.500H1ZM15.500 1H29v13.500H15.500ZM1 15.500h13.500V29H1ZM15.500 15.500H29V29H15.500Z" fill="url(#win)" />
                </svg>
            </TaskButton>
            <TaskButton label="Search">
                <Search className="size-[30px] fill-[#44484c] text-[#e4e6e8]" strokeWidth={2.3} />
            </TaskButton>
            <TaskButton label="File Explorer">
                <svg viewBox="0 0 30 28" className="h-7 w-[30px]">
                    <path d="M0 2.500C0 1 1 0 2.500 0H9l3 3.500V9H0Z" fill="#d9920a" />
                    <path d="M0 7h7l5-4h15.500C29 3 30 4 30 5.500V26H0Z" fill="#fdd04f" />
                    <path d="M5 27v-5c0-2 1-3 3-3h14c2 0 3 1 3 3v5Z" fill="#1173c7" />
                    <path d="M10 23h10" stroke="#0a4b8c" strokeWidth="1.500" />
                </svg>
            </TaskButton>
            <TaskButton label="OneNote">
                <svg viewBox="0 0 26 28" className="h-7 w-[26px]">
                    <rect x="4" width="22" height="28" rx="3" fill="#c15be8" />
                    <path d="M4 3c0-2 1-3 3-3h16c2 0 3 1 3 3v6H18v8H4Z" fill="#d98cf7" />
                    <path d="M18 17h8v8c0 2-1 3-3 3H4v-8c8 0 14 0 14-3Z" fill="#a22ad0" />
                    <rect y="13" width="12" height="12" rx="2" fill="#7a1ca6" />
                    <text x="6" y="23" textAnchor="middle" fontSize="10" fontWeight="700" fill="#fff" className="font-['Open_Sans',sans-serif]">
                        N
                    </text>
                </svg>
            </TaskButton>
            <TaskButton label="Chrome">
                <ChromeIcon />
            </TaskButton>
            <TaskButton label="Firefox">
                <svg viewBox="0 0 30 30" className="size-[30px]">
                    <defs>
                        <linearGradient id="fox" x1="0.800" y1="0" x2="0.200" y2="1">
                            <stop offset="0" stopColor="#fff036" />
                            <stop offset="0.450" stopColor="#ff8a1e" />
                            <stop offset="1" stopColor="#f0206a" />
                        </linearGradient>
                    </defs>
                    <path d="M3 7l2 2c1-2 2-3 4-4l1 3c2-1 5-1 6 0 0-4 1-6 3-8 1 4 3 5 5 7V5c3 3 5 7 5 12 0 7-6 12-14 12S1 24 1 16c0-4 1-6 2-9Z" fill="url(#fox)" />
                    <circle cx="15" cy="16" r="6" fill="#8a3bf0" />
                    <path d="M5 10c4-2 7-1 9 2l3 1-4 2c-3 0-4 2-3 4-4-1-6-5-5-9Z" fill="#ff8a1e" />
                </svg>
            </TaskButton>
            <TaskButton label="Chrome profile 1">
                <ChromeIcon badge={<Portrait bg="#35b5bd" skin="#d39a72" shirt="#1d4048" />} />
            </TaskButton>
            <TaskButton label="Chrome profile 2">
                <ChromeIcon badge={<span className="flex size-full items-center justify-center bg-[#7e57c2]">D</span>} />
            </TaskButton>
            <TaskButton label="Chrome profile 3">
                <ChromeIcon badge={<Portrait bg="#15100f" skin="#51413a" shirt="#372923" />} />
            </TaskButton>
            <TaskButton label="Chrome profile 4">
                <ChromeIcon badge={<Portrait bg="#efa9a9" skin="#dba987" shirt="#20305a" />} />
            </TaskButton>
            <WindowButton active icon={<BraveIcon />} label=":: Online Job A" />
            <TaskButton label="Chrome profile 5">
                <ChromeIcon badge={<span className="flex size-full items-center justify-center bg-[#33691e]">C</span>} />
            </TaskButton>
            <WindowButton
                icon={
                    <EdgeIcon
                        badge={
                            <svg viewBox="0 0 16 16">
                                <rect width="16" height="16" fill="#7b68b8" />
                                <circle cx="8" cy="8" r="5" fill="#222" stroke="#ddd" strokeWidth="2" />
                            </svg>
                        }
                    />
                }
                label="BMC/202526/"
                size="text-[15px]"
            />
            <TaskButton label="Edge calculator">
                <EdgeIcon
                    badge={
                        <svg viewBox="0 0 16 16">
                            <rect width="16" height="16" fill="#f5b57a" />
                            <rect x="4" y="3" width="8" height="10" fill="#17807e" />
                            <path d="M5 5.500h6M5 8.500h6M5 11h6" stroke="#fff" strokeDasharray="1.500 .7" />
                        </svg>
                    }
                />
            </TaskButton>
            <WindowButton
                icon={
                    <svg viewBox="0 0 30 30" className="size-[30px]">
                        <defs>
                            <linearGradient id="ring" x1="0" y1="0" x2="1" y2="1">
                                <stop offset="0" stopColor="#4f9a80" />
                                <stop offset="1" stopColor="#1d3a38" />
                            </linearGradient>
                        </defs>
                        <path d="M15 0a15 15 0 1 1 0 30 15 15 0 0 1 0-30Zm1 3.500c-4.500 0-7.500 5-7.500 11.500s3 11.500 7.500 11.500S23.500 21.500 23.500 15 20.500 3.500 16 3.500Z" fill="url(#ring)" fillRule="evenodd" />
                    </svg>
                }
                label="કવિ કાગની વાણ"
                size="text-[16px]"
            />
            <TaskButton label="Copilot">
                <svg viewBox="0 0 30 28" className="h-7 w-[30px]">
                    <defs>
                        <linearGradient id="cop-a" x1="0" y1="0" x2="0" y2="1">
                            <stop offset="0" stopColor="#1a8df0" />
                            <stop offset="0.600" stopColor="#45c48a" />
                            <stop offset="1" stopColor="#f5c02a" />
                        </linearGradient>
                        <linearGradient id="cop-b" x1="1" y1="0" x2="0" y2="1">
                            <stop offset="0" stopColor="#a05cf0" />
                            <stop offset="0.500" stopColor="#f2609a" />
                            <stop offset="1" stopColor="#ff9a4a" />
                        </linearGradient>
                    </defs>
                    <path d="M9 1h9c2 0 3 1 4 4l1 3h-5c-2 0-3 1-4 3l-3 8c-1 3-2 4-5 4-5 0-6-3-5-8l3-9c1-3 2-5 5-5Z" fill="url(#cop-a)" />
                    <path d="M21 27h-9c-2 0-3-1-4-4h4c2 0 3-1 4-3l3-8c1-3 2-4 5-4 5 0 6 3 5 7l-3 8c-1 3-2 4-5 4Z" fill="url(#cop-b)" />
                    <path d="M18 1c2 0 3 1 4 4l1 3h-5c-1-3-2-5-4-7Z" fill="#1c4fc4" />
                </svg>
            </TaskButton>
            <TaskButton label="Edge profile">
                <EdgeIcon badge={<Portrait bg="#c9c3b8" skin="#c58f70" shirt="#8e8a88" />} />
            </TaskButton>
            <TaskButton label="Notepad++">
                <svg viewBox="0 0 28 28" className="size-7">
                    <rect x="0" y="2" width="23" height="25" fill="#f2f5ef" />
                    <path d="M0 10c8-2 14 0 23-1v18H0Z" fill="#9be05a" />
                    <path d="M0 21h23v6H0Z" fill="#5cc41e" />
                    <path d="M1 3h21" stroke="#777" strokeWidth="2" strokeDasharray="1.500 1" />
                    <path d="M4 15c0-4 6-5 9-3M6 18c4 3 10 2 12-2M8 12h6v5H8ZM4 14l-2 2M17 9l3 2M5 22l4-2" fill="none" stroke="#1c4d12" strokeWidth="1.400" />
                    <path d="M27 1 19 21l-1 3 3-2L28 2Z" fill="#f0a51f" />
                </svg>
            </TaskButton>
            <TaskButton label="Falcon">
                <svg viewBox="0 0 30 30" className="size-[30px]">
                    <path d="M29 5C18-4 1 3 1 17c0 4 2 9 6 13 1-1 1-2 0-3C2 14 10 2 29 5Z" fill="#23a3b4" />
                    <path d="M29 8C17 5 7 11 7 19c0 3 1 6 3 8l2-3C8 16 15 9 29 8Z" fill="#2bb9c6" />
                    <path d="M28 11c-8 0-14 4-14 9v3l3-3c0-4 4-8 11-9Z" fill="#1c8fa3" />
                </svg>
            </TaskButton>

            <div className="ml-auto flex items-center font-['Open_Sans',sans-serif] text-[15px] leading-5">
                <button aria-label="Show hidden icons">
                    <ChevronUp className="size-5" strokeWidth={2.5} />
                </button>
                <span className="ml-[19px] font-['Noto_Sans',sans-serif] text-[18px] text-[#128a3a]">54</span>
                <button className="ml-[22px] w-[30px] text-center">
                    ENG
                    <br />
                    IN
                </button>
                <button aria-label="Network, sound and battery" className="ml-[21px] flex items-center gap-2">
                    <Wifi className="size-[22px]" />
                    <Volume2 className="size-5" strokeWidth={1.6} />
                    <svg viewBox="0 0 22 20" className="h-5 w-[22px]" fill="none" stroke="#fff" strokeWidth="1.600">
                        <path d="M9 5h8.500a2 2 0 0 1 2 2v7a2 2 0 0 1-2 2H4a2 2 0 0 1-2-2v-2M20.500 8.500v4" />
                        <path d="M4.500 14v-4L9 7h1.500v7Z" fill="#fff" stroke="none" />
                        <path d="M5 0 1 6h3l-1 4 4-6H4Z" fill="#fff" stroke="none" />
                    </svg>
                </button>
                <button className="mr-6 ml-[21px] text-right">
                    23:33:44
                    <br />
                    08-11-2025
                </button>
            </div>
        </footer>
    );
}

export default function App() {
    return (
        <div className="flex h-screen flex-col overflow-hidden bg-[#201f24]">
            <TabStrip />
            <div className="shrink-0 rounded-t-xl bg-[#3b3a3f]">
                <AddressRow />
                <BookmarksBar />
            </div>
            <div className="flex min-h-0 flex-1 bg-[#343434]">
                <div className="flex min-w-0 flex-1 pt-[7px] pr-1 pb-1 pl-[5px]">
                    <ReceiptPage />
                </div>
                <ScrollBar />
            </div>
            <Taskbar />
        </div>
    );
}
